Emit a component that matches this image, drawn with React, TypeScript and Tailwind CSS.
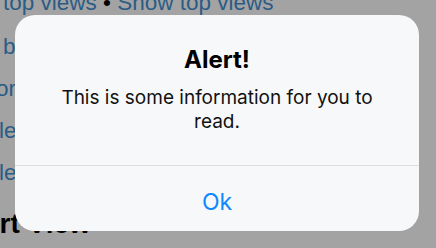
export default function App() {
  return (
    <div className="relative h-[248px] w-[436px] overflow-hidden bg-[#a3a3a3]">
      {/* page behind the dimmed overlay */}
      <div className="flex flex-col font-['Liberation_Sans',Arial,sans-serif] text-[22.5px] text-[#2b5c86]">
        <div className="-mt-[11px] h-[28px] whitespace-nowrap pl-[3px] leading-[28px]">
          top views <span className="text-black">•</span> Show top views
        </div>
        <div className="mt-[16px] h-[42px] whitespace-nowrap pl-[3px] leading-[28px]">bar views</div>
        <div className="h-[42px] whitespace-nowrap -ml-[4px] leading-[28px]">orientation</div>
        <div className="h-[42px] whitespace-nowrap -ml-[1px] leading-[28px]">left views</div>
        <div className="h-[42px] whitespace-nowrap -ml-[1px] leading-[28px]">level views</div>
        <div className="mt-[6px] whitespace-nowrap -ml-[44px] text-[28px] font-bold leading-[34px] text-black">
          Alert View
        </div>
      </div>

      {/* alert */}
      <div className="absolute left-[15px] top-[15px] flex h-[216px] w-[404px] flex-col overflow-hidden rounded-[20px] bg-[#f7f8f9] font-['Inter',sans-serif] text-black">
        <div className="flex h-[150px] flex-col items-center px-[40px] pt-[30px] text-center">
          <div className="text-[24px] font-bold leading-[30px]">Alert!</div>
          <div className="mt-[11px] text-[19px] leading-[24px] text-[#111]">
            This is some information for you to read.
          </div>
        </div>
        <div className="h-px bg-[#dcdde0]" />
        <div className="flex flex-1 items-center justify-center pt-[6px] text-[23px] leading-[28px] text-[#0f87fe]">
          Ok
        </div>
      </div>
    </div>
  );
}
